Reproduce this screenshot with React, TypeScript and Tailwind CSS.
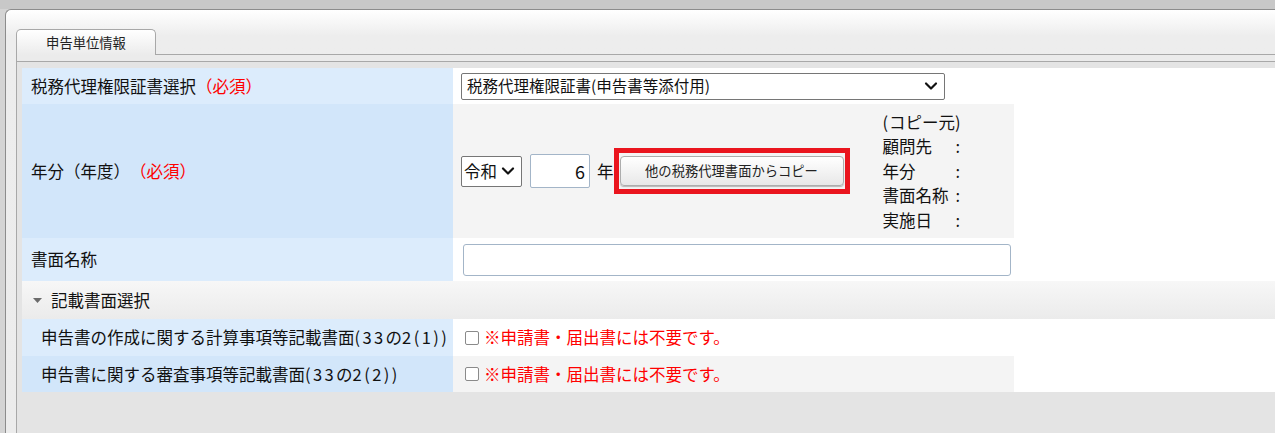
import React from 'react';
import { ChevronDown } from 'lucide-react';

// 必須マーク
const Required = () => <span className="text-[#ff0000]">（必須）</span>;

// 半角部分（幅を合わせる）
const Half: React.FC<{ children: React.ReactNode }> = ({ children }) => (
  <span className="tracking-[2.4px]">{children}</span>
);

// セレクト風ボックス
const SelectBox: React.FC<{ label: string; className?: string }> = ({ label, className = '' }) => (
  <div
    className={`flex items-center justify-between border border-[#767676] rounded-[2px] bg-white pl-[5px] pr-[3px] ${className}`}
  >
    <span className="leading-none">{label}</span>
    <ChevronDown size={20} strokeWidth={2.6} className="text-[#111] shrink-0" />
  </div>
);

// チェック + 注意書き
const NoteCheck = () => (
  <div className="flex items-center">
    <span className="w-[14px] h-[14px] border border-[#8a8a8a] rounded-[2px] bg-white" />
    <span className="ml-[5px] text-[#ff0000]">※申請書・届出書には不要です。</span>
  </div>
);

const copyRows = ['顧問先', '年分', '書面名称', '実施日'];

const App: React.FC = () => {
  return (
    <div className="w-[1275px] h-[433px] overflow-hidden bg-[#d4d4d4] pt-[9px] pl-[5px] text-[16.5px] text-[#111] font-['Noto_Sans_CJK_JP','Noto_Sans_CJK_SC',sans-serif]">
      {/* 上部の帯 */}
      <div className="absolute left-0 top-0 w-[1275px] h-[9px] bg-[#c8c8c8]" />
      <div className="h-full border-l border-t border-[#8c8c8c] rounded-tl-[6px] bg-[linear-gradient(to_bottom,#ffffff_0px,#ededed_26px,#ececec_100%)] pl-[10px] pt-[19px] flex flex-col">
        {/* タブ */}
        <div className="flex items-end h-[26px]">
          <div className="w-[140px] h-[26px] border-l border-t border-r border-[#a8a8a8] rounded-t-[5px] bg-[linear-gradient(to_bottom,#ffffff,#ebebeb)] flex items-center justify-center text-[13.3px] text-[#222] leading-none">
            申告単位情報
          </div>
          <div className="flex-1 border-b border-[#a8a8a8]" />
        </div>
        <div className="h-[6px] border-l border-[#a8a8a8] bg-[#ebebeb]" />

        {/* 本体 */}
        <div className="flex-1 border-l border-t border-[#a8a8a8] bg-[#e4e4e4] pt-[6px] pl-[5px] flex flex-col">
          <div className="bg-white flex flex-col">
            {/* 税務代理権限証書選択 */}
            <div className="flex h-[36px]">
              <div className="w-[431px] bg-[#dcecfc] pl-[9px] flex items-center">
                税務代理権限証書選択<Required />
              </div>
              <div className="flex-1 pl-[8px] flex items-center">
                <SelectBox
                  label="税務代理権限証書(申告書等添付用)"
                  className="w-[484px] h-[27px] text-[15.5px]"
                />
              </div>
            </div>

            {/* 年分 */}
            <div className="flex h-[134px]">
              <div className="w-[431px] bg-[#d2e6fa] pl-[9px] flex items-center">
                年分（年度）<Required />
              </div>
              <div className="w-[561px] bg-[#f4f4f4] pl-[8px] flex items-center">
                <SelectBox label="令和" className="w-[61px] h-[31px] !pl-[2px]" />
                <div className="ml-[8px] w-[60px] h-[34px] border border-[#a3b5c8] rounded-[2px] bg-white flex items-center justify-end pr-[4px] text-[18px] leading-none">
                  6
                </div>
                <span className="ml-[7px] leading-none">年</span>
                <div className="border-[5px] border-[#ea151e] px-[1px] py-[3px]">
                  <button className="w-[224px] h-[30px] border border-[#adadad] rounded-[4px] bg-[linear-gradient(to_bottom,#ffffff,#e8e8e8)] shadow-[0_1px_1px_rgba(0,0,0,0.25)] text-[13.3px] text-[#222] leading-none">
                    他の税務代理書面からコピー
                  </button>
                </div>
                <div className="ml-[33px] leading-[24.5px]">
                  <div>
                    <span className="tracking-[1px]">(</span>コピー元<span>)</span>
                  </div>
                  {copyRows.map((r) => (
                    <div key={r} className="flex">
                      <span className="w-[73px]">{r}</span>
                      <span>:</span>
                    </div>
                  ))}
                </div>
              </div>
            </div>

            {/* 書面名称 */}
            <div className="flex h-[43px]">
              <div className="w-[431px] bg-[#dcecfc] pl-[9px] flex items-center">書面名称</div>
              <div className="flex-1 pl-[10px] flex items-center">
                <div className="w-[548px] h-[32px] border border-[#a3b5c8] rounded-[3px] bg-white" />
              </div>
            </div>

            {/* 記載書面選択 */}
            <div className="h-[38px] bg-[linear-gradient(to_bottom,#f7f7f7,#ebebeb)] pl-[11px] flex items-center">
              <svg width="9" height="5" viewBox="0 0 9 5" className="mr-[9px]">
                <path d="M0 0H9L4.5 5Z" fill="#6b6b6b" />
              </svg>
              記載書面選択
            </div>

            <div className="flex h-[37px]">
              <div className="w-[431px] bg-[#dcecfc] pl-[19px] flex items-center">
                申告書の作成に関する計算事項等記載書面<Half>(33</Half>の<Half>2(1))</Half>
              </div>
              <div className="flex-1 pl-[12px] flex items-center">
                <NoteCheck />
              </div>
            </div>

            <div className="flex h-[36px]">
              <div className="w-[431px] bg-[#d2e6fa] pl-[19px] flex items-center">
                申告書に関する審査事項等記載書面<Half>(33</Half>の<Half>2(2))</Half>
              </div>
              <div className="w-[561px] bg-[#f4f4f4] pl-[12px] flex items-center">
                <NoteCheck />
              </div>
              <div className="flex-1 bg-white" />
            </div>
          </div>
        </div>
      </div>
    </div>
  );
};

export default App;
